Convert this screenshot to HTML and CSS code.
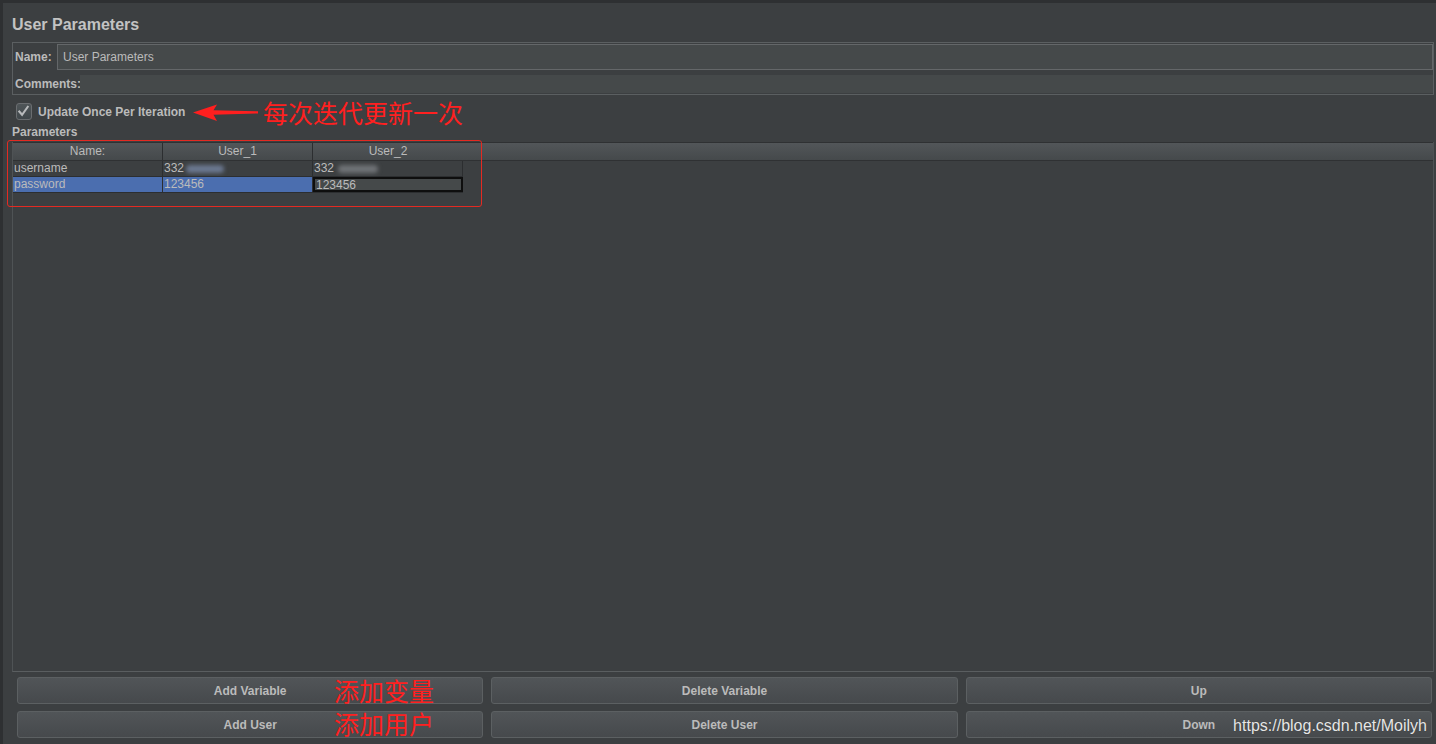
FILE: index.html
```html
<!DOCTYPE html>
<html lang="zh">
<head>
<meta charset="utf-8">
<title>User Parameters</title>
<link rel="stylesheet" href="styles.css">
</head>
<body>
<div class="app">
  <div class="title">User Parameters</div>
  <div class="info-panel">
    <div class="info-row name-row">
      <span class="lbl">Name:</span>
      <div class="field field-name">User Parameters</div>
    </div>
    <div class="info-row comments-row">
      <span class="lbl">Comments:</span>
      <div class="field field-comments"></div>
    </div>
  </div>
  <div class="check-row">
    <span class="checkbox">
      <svg width="16" height="17" viewBox="0 0 16 17"><path d="M3.5 8.5 L6.5 12 L12.5 3.5" fill="none" stroke="#b8babc" stroke-width="2.2" stroke-linecap="square"/></svg>
    </span>
    <span class="check-label">Update Once Per Iteration</span>
  </div>
  <div class="section-label">Parameters</div>
  <div class="table-pane">
    <div class="thead">
      <div class="th">Name:</div>
      <div class="th">User_1</div>
      <div class="th th-last">User_2</div>
      <div class="th th-fill"></div>
    </div>
    <div class="tbody">
      <div class="tr">
        <div class="td">username</div>
        <div class="td">332<span class="blur b1"></span></div>
        <div class="td">332<span class="blur b2"></span></div>
      </div>
      <div class="tr">
        <div class="td sel">password</div>
        <div class="td sel">123456</div>
        <div class="td edit">123456</div>
      </div>
    </div>
  </div>
  <div class="buttons">
    <div class="btn">Add Variable</div>
    <div class="btn">Delete Variable</div>
    <div class="btn">Up</div>
    <div class="btn">Add User</div>
    <div class="btn">Delete User</div>
    <div class="btn">Down</div>
  </div>

  <div class="note-box"></div>
  <svg class="note-arrow" width="70" height="22" viewBox="0 0 70 22"><path d="M2 11.5 L26 3.5 L22.5 9.3 L67 10.3 L67 12.5 L22.5 13.8 L26 20 Z" fill="#ff1f1f"/></svg>
  <div class="note note-iter">每次迭代更新一次</div>
  <div class="note note-var">添加变量</div>
  <div class="note note-user">添加用户</div>
  <div class="watermark">https://blog.csdn.net/Moilyh</div>
</div>
</body>
</html>
```
FILE: styles.css
```css
* { box-sizing: border-box; }
html, body { margin: 0; padding: 0; }
body {
  background: #3c3f41;
  font-family: "Liberation Sans", Arial, sans-serif;
  color: #bbbbbb;
}
.app {
  position: relative;
  width: 1436px;
  height: 744px;
  background: #3c3f41;
  border-top: 3px solid #2e3032;
  border-left: 3px solid #2e3032;
  display: flex;
  flex-direction: column;
  padding: 0 2px 6px 9px;
  overflow: hidden;
}
.title {
  margin-top: 12px;
  height: 20px;
  line-height: 20px;
  font-size: 16px;
  font-weight: bold;
  color: #c3c3c3;
}
.info-panel {
  margin-top: 7px;
  border: 1px solid #5b5f61;
  padding: 1px 0 1px 1px;
  display: flex;
  flex-direction: column;
  gap: 5px;
}
.info-row {
  display: flex;
  align-items: center;
}
.lbl {
  font-size: 12px;
  font-weight: bold;
  color: #bbbbbb;
  padding-left: 1px;
}
.name-row { height: 26px; }
.name-row .lbl { width: 43px; }
.field {
  flex: 1;
  background: #45494a;
  font-size: 12px;
  color: #bbbbbb;
}
.field-name {
  height: 26px;
  line-height: 24px;
  border: 1px solid #646769;
  padding-left: 5px;
}
.comments-row { height: 18px; }
.comments-row .lbl { width: 66px; }
.field-comments { height: 18px; }
.check-row {
  margin-top: 8px;
  height: 17px;
  display: flex;
  align-items: center;
  padding-left: 4px;
}
.checkbox {
  width: 16px;
  height: 17px;
  border: 1px solid #6a6d70;
  border-radius: 3px;
  background: linear-gradient(#4f5558, #40474b);
  display: flex;
}
.checkbox svg { margin: -1px 0 0 -1px; }
.check-label {
  margin-left: 6px;
  font-size: 12px;
  font-weight: bold;
  color: #bbbbbb;
}
.section-label {
  margin-top: 5px;
  height: 14px;
  line-height: 14px;
  font-size: 12px;
  font-weight: bold;
  color: #bbbbbb;
}
.table-pane {
  margin-top: 3px;
  flex: 1;
  border: 1px solid #4f5355;
  border-top: none;
  border-bottom-color: #5a5e60;
  display: flex;
  flex-direction: column;
}
.thead {
  display: flex;
  height: 19px;
  background: linear-gradient(#525659, #45494b);
  border-top: 1px solid #2f3133;
  border-bottom: 1px solid #2f3133;
}
.th {
  width: 150px;
  border-right: 1px solid #2c2e30;
  font-size: 12px;
  line-height: 17px;
  text-align: center;
  color: #bbbbbb;
}
.th-last { border-right: none; width: 150px; }
.th-fill { flex: 1; border-right: none; }
.tbody { width: 450px; }
.tr { display: flex; height: 16px; border-bottom: 1px solid #2c2e30; }
.td {
  width: 150px;
  border-right: 1px solid #2c2e30;
  font-size: 12px;
  line-height: 15px;
  padding-left: 1px;
  color: #bbbbbb;
  white-space: nowrap;
  position: relative;
}
.td.sel { background: #4b6eaf; }
.td.edit {
  background: #45494a;
  border: 2px solid #0e0e0e;
  line-height: 13px;
  padding-left: 1px;
}
.blur {
  display: inline-block;
  vertical-align: middle;
  height: 8px;
  border-radius: 4px;
  filter: blur(2px);
}
.b1 { width: 38px; background: #6b7890; margin-left: 2px; }
.b2 { width: 40px; background: #6f7276; margin-left: 4px; }
.buttons {
  margin-top: 5px;
  padding-left: 5px;
  padding-right: 2px;
  display: grid;
  grid-template-columns: repeat(3, 1fr);
  grid-auto-rows: 27px;
  column-gap: 8px;
  row-gap: 7px;
}
.btn {
  border: 1px solid #5c6062;
  border-radius: 3px;
  background: linear-gradient(#515558, #46494c);
  font-size: 12px;
  font-weight: bold;
  color: #bbbbbb;
  display: flex;
  align-items: center;
  justify-content: center;
}
.note-box {
  position: absolute;
  left: 4px;
  top: 137px;
  width: 475px;
  height: 67px;
  border: 1px solid #e42a22;
  border-radius: 3px;
}
.note-arrow {
  position: absolute;
  left: 188px;
  top: 98px;
}
.note {
  position: absolute;
  font-family: "Noto Sans CJK SC", sans-serif;
  font-size: 25px;
  line-height: 28px;
  color: #ff2020;
  white-space: nowrap;
}
.note-iter { left: 260px; top: 95px; }
.note-var { left: 331px; top: 673px; }
.note-user { left: 331px; top: 706px; }
.watermark {
  position: absolute;
  right: 9px;
  top: 713px;
  font-size: 16px;
  line-height: 20px;
  color: #e6e6e6;
  text-shadow: 0 0 1px rgba(0,0,0,0.4);
}
```
